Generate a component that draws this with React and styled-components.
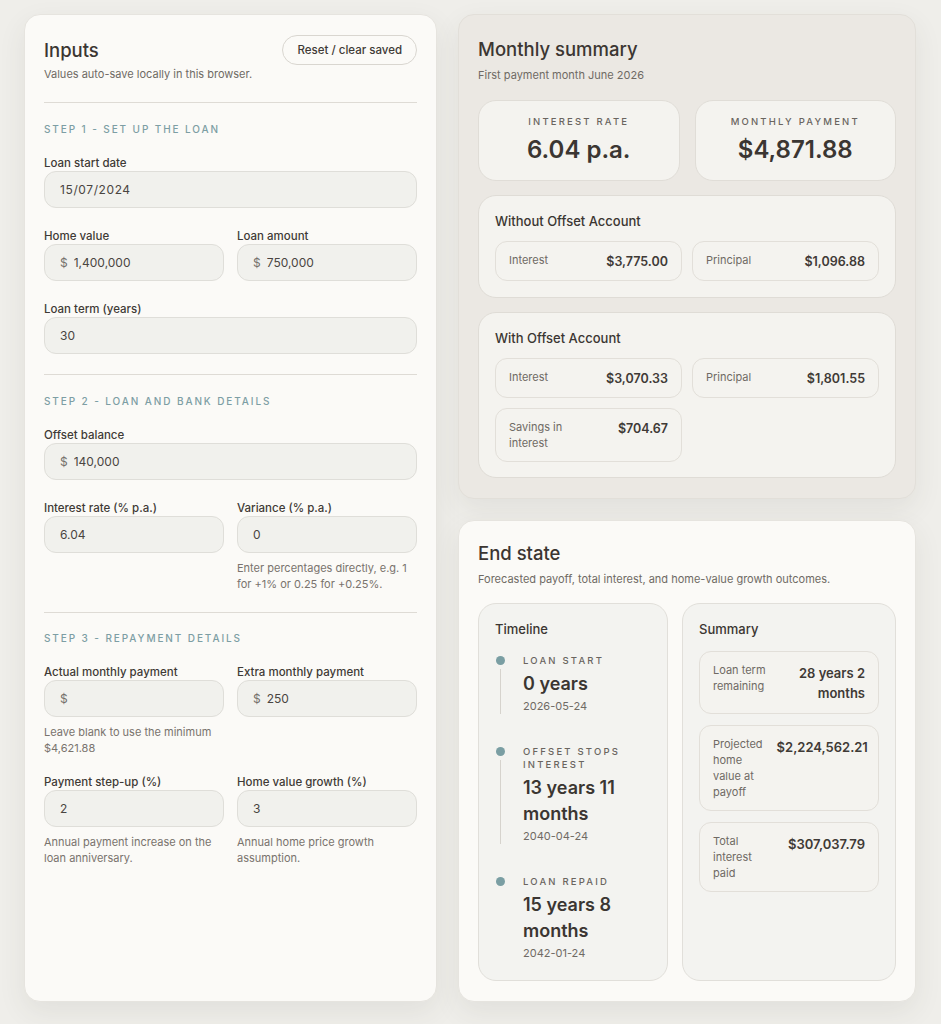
import React from 'react';
import styled, { createGlobalStyle } from 'styled-components';

const GlobalStyle = createGlobalStyle`
  * { box-sizing: border-box; }
  html, body { margin: 0; padding: 0; }
  body {
    background: #efeeea;
    font-family: Inter, "Noto Sans", "Liberation Sans", sans-serif;
    color: #3b3632;
  }
`;

const Page = styled.div`
  display: grid;
  grid-template-columns: 413px 458px;
  gap: 21px;
  padding: 14px 25px 22px 24px;
  min-height: 1024px;
`;

const Panel = styled.section`
  background: ${(p) => (p.$tone === 'warm' ? '#ebe8e3' : '#fbfaf7')};
  border: 1px solid ${(p) => (p.$tone === 'warm' ? '#e2dfd9' : '#e6e4df')};
  border-radius: 16px;
  box-shadow: 0 10px 28px rgba(70, 60, 50, 0.08);
  padding: 20px 19px;
  display: flex;
  flex-direction: column;
  flex: ${(p) => (p.$grow ? '1' : '0 0 auto')};
`;

const RightColumn = styled.div`
  display: flex;
  flex-direction: column;
  gap: 21px;
`;

const HeaderRow = styled.div`
  display: flex;
  justify-content: space-between;
  align-items: center;
  min-height: 30px;
`;

const Title = styled.h2`
  margin: ${(p) => (p.$top ? '2px 0 0' : '0')};
  font-size: 18.5px;
  line-height: 24px;
  font-weight: 500;
  color: #3b3632;
`;

const Subtitle = styled.p`
  margin: ${(p) => p.$margin || '1px 0 0'};
  font-size: 11px;
  line-height: 16px;
  color: #6f6a64;
`;

const ResetButton = styled.button`
  height: 30px;
  padding: 0 14px;
  border-radius: 999px;
  border: 1px solid #d9d6d0;
  background: #fbfaf7;
  font-family: inherit;
  font-size: 11.5px;
  font-weight: 500;
  color: #3f3a36;
`;

const Divider = styled.hr`
  border: 0;
  border-top: 1px solid #dedbd5;
  margin: ${(p) => p.$margin || '20px 0 19px'};
`;

const Section = styled.div`
  display: flex;
  flex-direction: column;
  gap: ${(p) => p.$gap || '21px'};
`;

const StepLabel = styled.div`
  font-size: 10px;
  line-height: 14px;
  font-weight: 500;
  letter-spacing: 1.9px;
  color: #7d9ea4;
  text-transform: uppercase;
  margin-bottom: ${(p) => p.$mb || '-1px'};
`;

const Row = styled.div`
  display: grid;
  grid-template-columns: ${(p) => (p.$split ? 'minmax(0, 1fr) minmax(0, 1fr)' : 'minmax(0, 1fr)')};
  column-gap: 13px;
`;

const Field = styled.div`
  display: flex;
  flex-direction: column;
  min-width: 0;
`;

const Label = styled.label`
  font-size: 11.5px;
  line-height: 14px;
  font-weight: 500;
  color: #3f3a36;
  margin-bottom: 1px;
`;

const InputShell = styled.div`
  display: flex;
  align-items: center;
  gap: 6px;
  height: 37px;
  padding: 0 15px;
  background: #f1f1ed;
  border: 1px solid #dfded9;
  border-radius: 12px;
`;

const Prefix = styled.span`
  font-size: 12px;
  color: #75716c;
`;

const Input = styled.input`
  flex: 1;
  width: 100%;
  min-width: 0;
  border: 0;
  background: transparent;
  font-family: inherit;
  font-size: 12px;
  color: #4a4541;
  letter-spacing: ${(p) => (p.$date ? '0.6px' : '0')};
  padding: 0;
  outline: none;
`;

const Help = styled.p`
  margin: 7px 0 0;
  font-size: 11px;
  line-height: 16px;
  color: #79736d;
`;

const StatGrid = styled.div`
  display: grid;
  grid-template-columns: minmax(0, 1fr) minmax(0, 1fr);
  gap: 15px;
  margin-top: 17px;
`;

const StatCard = styled.div`
  background: #f4f3ef;
  border: 1px solid #e0ddd7;
  border-radius: 18px;
  padding: 14px 10px 15px;
  text-align: center;
`;

const Caps = styled.div`
  font-size: ${(p) => p.$size || '9.5px'};
  line-height: ${(p) => p.$lh || '14px'};
  font-weight: 500;
  letter-spacing: 2.2px;
  text-transform: uppercase;
  color: #6a655f;
`;

const BigValue = styled.div`
  margin-top: 6px;
  font-size: 24px;
  line-height: 30px;
  font-weight: 600;
  color: #3b3632;
`;

const GroupCard = styled.div`
  background: #f4f3ef;
  border: 1px solid #dfdcd6;
  border-radius: 18px;
  padding: 16px 16px ${(p) => p.$pb || '16px'};
  margin-top: 14px;
`;

const GroupTitle = styled.h3`
  margin: 0 0 11px;
  font-size: 13px;
  line-height: 18px;
  font-weight: 500;
  color: #3b3632;
`;

const MiniGrid = styled.div`
  display: grid;
  grid-template-columns: minmax(0, 1fr) minmax(0, 1fr);
  gap: 10px;
`;

const MiniCard = styled.div`
  display: flex;
  justify-content: space-between;
  align-items: flex-start;
  gap: ${(p) => p.$gap || '10px'};
  padding: 10px 13px;
  border: 1px solid #e2dfd9;
  border-radius: 12px;
  background: #f4f3ef;
`;

const MiniLabel = styled.span`
  font-size: 11px;
  line-height: 16px;
  color: #6f6a64;
  max-width: ${(p) => p.$max || 'none'};
  flex: ${(p) => (p.$flex ? '1 1 0' : '0 1 auto')};
`;

const MiniValue = styled.span`
  font-size: ${(p) => (p.$flex ? '13px' : '12.5px')};
  line-height: ${(p) => (p.$flex ? '20px' : '17px')};
  font-weight: 600;
  color: #3f3a36;
  text-align: right;
  padding-top: 1px;
  flex: ${(p) => (p.$flex ? '1 1 0' : '0 0 auto')};
`;

const EndColumns = styled.div`
  flex: 1;
  display: grid;
  grid-template-columns: 190px minmax(0, 1fr);
  gap: 14px;
  margin-top: 16px;
`;

const ColumnCard = styled.div`
  background: #f3f3f0;
  border: 1px solid #e1dfda;
  border-radius: 18px;
  padding: 16px 16px;
`;

const ColumnTitle = styled.h3`
  margin: 0 0 ${(p) => p.$mb || '16px'};
  font-size: 13px;
  line-height: 18px;
  font-weight: 500;
  color: #3b3632;
`;

const Timeline = styled.div`
  display: flex;
  flex-direction: column;
  gap: 31px;
`;

const TimelineItem = styled.div`
  display: flex;
  gap: 18px;
`;

const Rail = styled.div`
  width: 10px;
  flex: 0 0 10px;
  display: flex;
  flex-direction: column;
  align-items: center;
  padding-top: 2px;
`;

const Dot = styled.span`
  width: 9px;
  height: 9px;
  border-radius: 50%;
  background: #7a9ea3;
`;

const RailLine = styled.span`
  flex: 1;
  width: 1px;
  margin-top: 4px;
  background: #d6d3cd;
`;

const TimelineBody = styled.div`
  flex: 1;
  min-width: 0;
`;

const TimelineValue = styled.div`
  margin-top: 4px;
  font-size: 18px;
  line-height: 26px;
  font-weight: 600;
  color: #3b3632;
`;

const TimelineDate = styled.div`
  margin-top: 1px;
  font-size: 11px;
  line-height: 16px;
  color: #6f6a64;
`;

const SummaryList = styled.div`
  display: flex;
  flex-direction: column;
  gap: 11px;
`;

const MoneyField = ({ label, value, prefix }) => (
  <Field>
    <Label>{label}</Label>
    <InputShell>
      {prefix && <Prefix>$</Prefix>}
      <Input defaultValue={value} readOnly />
    </InputShell>
  </Field>
);

const timeline = [
  { label: 'Loan start', value: '0 years', date: '2026-05-24', line: true },
  { label: 'Offset stops interest', value: '13 years 11 months', date: '2040-04-24', line: true },
  { label: 'Loan repaid', value: '15 years 8 months', date: '2042-01-24', line: false },
];

const summary = [
  { label: 'Loan term remaining', value: '28 years 2 months' },
  { label: 'Projected home value at payoff', value: '$2,224,562.21' },
  { label: 'Total interest paid', value: '$307,037.79' },
];

export default function App() {
  return (
    <>
      <GlobalStyle />
      <Page>
        <Panel>
          <HeaderRow>
            <Title>Inputs</Title>
            <ResetButton type="button">Reset / clear saved</ResetButton>
          </HeaderRow>
          <Subtitle>Values auto-save locally in this browser.</Subtitle>
          <Divider />

          <Section>
            <StepLabel>Step 1 - Set up the loan</StepLabel>
            <Field>
              <Label>Loan start date</Label>
              <InputShell>
                <Input $date defaultValue="15/07/2024" readOnly />
              </InputShell>
            </Field>
            <Row $split>
              <MoneyField label="Home value" value="1,400,000" prefix />
              <MoneyField label="Loan amount" value="750,000" prefix />
            </Row>
            <MoneyField label="Loan term (years)" value="30" />
          </Section>
          <Divider />

          <Section>
            <StepLabel>Step 2 - Loan and bank details</StepLabel>
            <MoneyField label="Offset balance" value="140,000" prefix />
            <Row $split>
              <MoneyField label="Interest rate (% p.a.)" value="6.04" />
              <Field>
                <MoneyField label="Variance (% p.a.)" value="0" />
                <Help>Enter percentages directly, e.g. 1 for +1% or 0.25 for +0.25%.</Help>
              </Field>
            </Row>
          </Section>
          <Divider $margin="20px 0 18px" />

          <Section $gap="19px">
            <StepLabel $mb="1px">Step 3 - Repayment details</StepLabel>
            <Row $split>
              <Field>
                <MoneyField label="Actual monthly payment" value="" prefix />
                <Help>Leave blank to use the minimum $4,621.88</Help>
              </Field>
              <MoneyField label="Extra monthly payment" value="250" prefix />
            </Row>
            <Row $split>
              <Field>
                <MoneyField label="Payment step-up (%)" value="2" />
                <Help>Annual payment increase on the loan anniversary.</Help>
              </Field>
              <Field>
                <MoneyField label="Home value growth (%)" value="3" />
                <Help>Annual home price growth assumption.</Help>
              </Field>
            </Row>
          </Section>
        </Panel>

        <RightColumn>
          <Panel $tone="warm">
            <Title $top>Monthly summary</Title>
            <Subtitle $margin="6px 0 0">First payment month June 2026</Subtitle>
            <StatGrid>
              <StatCard>
                <Caps>Interest rate</Caps>
                <BigValue>6.04 p.a.</BigValue>
              </StatCard>
              <StatCard>
                <Caps>Monthly payment</Caps>
                <BigValue>$4,871.88</BigValue>
              </StatCard>
            </StatGrid>

            <GroupCard>
              <GroupTitle>Without Offset Account</GroupTitle>
              <MiniGrid>
                <MiniCard>
                  <MiniLabel>Interest</MiniLabel>
                  <MiniValue>$3,775.00</MiniValue>
                </MiniCard>
                <MiniCard>
                  <MiniLabel>Principal</MiniLabel>
                  <MiniValue>$1,096.88</MiniValue>
                </MiniCard>
              </MiniGrid>
            </GroupCard>

            <GroupCard $pb="15px">
              <GroupTitle>With Offset Account</GroupTitle>
              <MiniGrid>
                <MiniCard>
                  <MiniLabel>Interest</MiniLabel>
                  <MiniValue>$3,070.33</MiniValue>
                </MiniCard>
                <MiniCard>
                  <MiniLabel>Principal</MiniLabel>
                  <MiniValue>$1,801.55</MiniValue>
                </MiniCard>
                <MiniCard>
                  <MiniLabel $max="70px">Savings in interest</MiniLabel>
                  <MiniValue>$704.67</MiniValue>
                </MiniCard>
              </MiniGrid>
            </GroupCard>
          </Panel>

          <Panel $grow>
            <Title>End state</Title>
            <Subtitle $margin="6px 0 0">
              Forecasted payoff, total interest, and home-value growth outcomes.
            </Subtitle>
            <EndColumns>
              <ColumnCard>
                <ColumnTitle>Timeline</ColumnTitle>
                <Timeline>
                  {timeline.map((item) => (
                    <TimelineItem key={item.label}>
                      <Rail>
                        <Dot />
                        {item.line && <RailLine />}
                      </Rail>
                      <TimelineBody>
                        <Caps $size="9.5px" $lh="13px">{item.label}</Caps>
                        <TimelineValue>{item.value}</TimelineValue>
                        <TimelineDate>{item.date}</TimelineDate>
                      </TimelineBody>
                    </TimelineItem>
                  ))}
                </Timeline>
              </ColumnCard>
              <ColumnCard>
                <ColumnTitle $mb="13px">Summary</ColumnTitle>
                <SummaryList>
                  {summary.map((item) => (
                    <MiniCard key={item.label} $gap="14px">
                      <MiniLabel $flex $max="58px">{item.label}</MiniLabel>
                      <MiniValue $flex>{item.value}</MiniValue>
                    </MiniCard>
                  ))}
                </SummaryList>
              </ColumnCard>
            </EndColumns>
          </Panel>
        </RightColumn>
      </Page>
    </>
  );
}
